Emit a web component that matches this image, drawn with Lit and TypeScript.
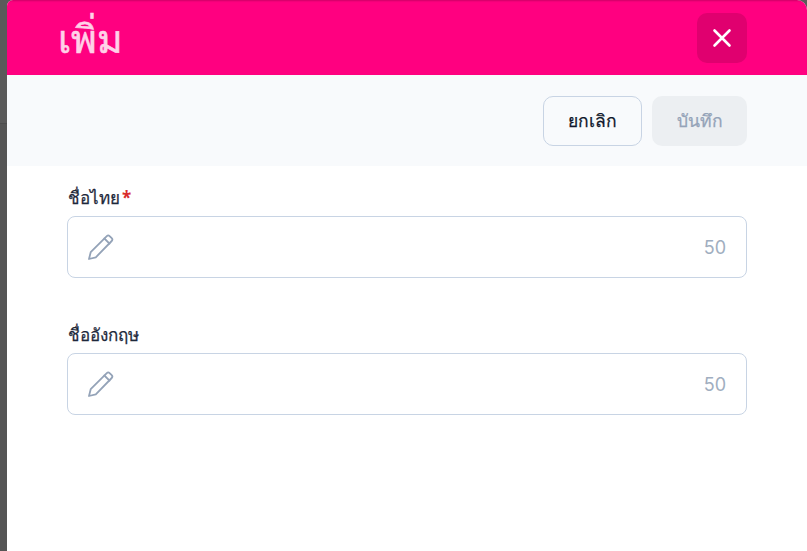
import { css, html, LitElement } from 'lit';
import { customElement, property } from 'lit/decorators.js';

@customElement('name-field')
export class NameField extends LitElement {
  static styles = css`
    :host {
      display: block;
    }

    label {
      display: block;
      height: 32px;
      padding-left: 1px;
      font-size: 17px;
      line-height: 27px;
      color: #1e293b;
      -webkit-text-stroke: 0.25px #1e293b;
    }

    .req {
      margin-left: 2px;
      font-weight: 700;
      color: #d92d2d;
      -webkit-text-stroke: 0;
    }

    .box {
      display: flex;
      align-items: center;
      justify-content: space-between;
      box-sizing: border-box;
      height: 62px;
      padding: 0 20px;
      background: #fff;
      border: 1px solid #c8d4e4;
      border-radius: 8px;
    }

    svg {
      display: block;
      width: 28px;
      height: 28px;
      margin-left: -1px;
      fill: none;
      stroke: #94a3b8;
      stroke-width: 1.8;
      stroke-linecap: round;
      stroke-linejoin: round;
    }

    .count {
      font-family: 'Inter', sans-serif;
      font-size: 18px;
      color: #a0aec0;
    }
  `;

  @property({ type: String })
  label = '';

  @property({ type: Boolean })
  required = false;

  render() {
    return html`
      <label>${this.label}${this.required ? html`<span class="req">*</span>` : ''}</label>
      <div class="box">
        <svg viewBox="0 0 28 28">
          <path d="M2 26l1.700-6.800L19.800 3.100a2 2 0 0 1 2.800 0l2.100 2.100a2 2 0 0 1 0 2.800L8.800 24.300z" />
          <path d="M17.400 5.500l5.100 5.100" />
        </svg>
        <span class="count">50</span>
      </div>
    `;
  }
}

@customElement('app-root')
export class AppRoot extends LitElement {
  static styles = css`
    :host {
      display: flex;
      height: 551px;
      overflow: hidden;
      background: linear-gradient(#5a5a5a 0 123px, #4d4d4d 123px 124px, #555 124px);
      font-family: 'Noto Sans', 'Liberation Sans', sans-serif;
    }

    .panel {
      flex: 1;
      display: flex;
      flex-direction: column;
      margin-left: 7px;
      background: #fff;
      border-top-left-radius: 6px;
      border-top-right-radius: 10px;
      overflow: hidden;
    }

    .head {
      display: flex;
      align-items: center;
      justify-content: space-between;
      box-sizing: border-box;
      height: 75px;
      padding: 0 60px 0 51px;
      background: #ff0080;
      box-shadow: inset 0 2px 2px -1px rgba(0, 0, 0, 0.2);
    }

    h1 {
      margin: 0;
      font-size: 39px;
      font-weight: 400;
      line-height: 75px;
      color: #ffd1e8;
      -webkit-text-stroke: 0.6px #ffd1e8;
    }

    .close {
      display: flex;
      align-items: center;
      justify-content: center;
      width: 50px;
      height: 50px;
      padding: 0;
      border: 0;
      border-radius: 10px;
      background: #e0006f;
    }

    .close svg {
      width: 26px;
      height: 26px;
      stroke: #fff;
      stroke-width: 2.6;
      stroke-linecap: round;
    }

    .tools {
      display: flex;
      justify-content: flex-end;
      gap: 10px;
      box-sizing: border-box;
      height: 91px;
      padding: 21px 60px 0 0;
      background: #f8fafc;
    }

    .btn {
      box-sizing: border-box;
      height: 50px;
      border-radius: 10px;
      font: inherit;
      font-size: 17.5px;
    }

    .cancel {
      width: 99px;
      background: #f8fafc;
      border: 1px solid #c8d4e4;
      color: #0f172a;
      -webkit-text-stroke: 0.25px #0f172a;
    }

    .save {
      width: 95px;
      background: #eceff2;
      border: 0;
      color: #94a3b8;
      -webkit-text-stroke: 0.25px #94a3b8;
    }

    .fields {
      display: flex;
      flex-direction: column;
      gap: 43px;
      padding: 18px 60px 0;
    }
  `;

  render() {
    return html`
      <div class="panel">
        <div class="head">
          <h1>เพิ่ม</h1>
          <button class="close">
            <svg viewBox="0 0 26 26"><path d="M5.500 5.500l15 15M20.500 5.500l-15 15" /></svg>
          </button>
        </div>
        <div class="tools">
          <button class="btn cancel">ยกเลิก</button>
          <button class="btn save">บันทึก</button>
        </div>
        <div class="fields">
          <name-field label="ชื่อไทย" required></name-field>
          <name-field label="ชื่ออังกฤษ"></name-field>
        </div>
      </div>
    `;
  }
}
